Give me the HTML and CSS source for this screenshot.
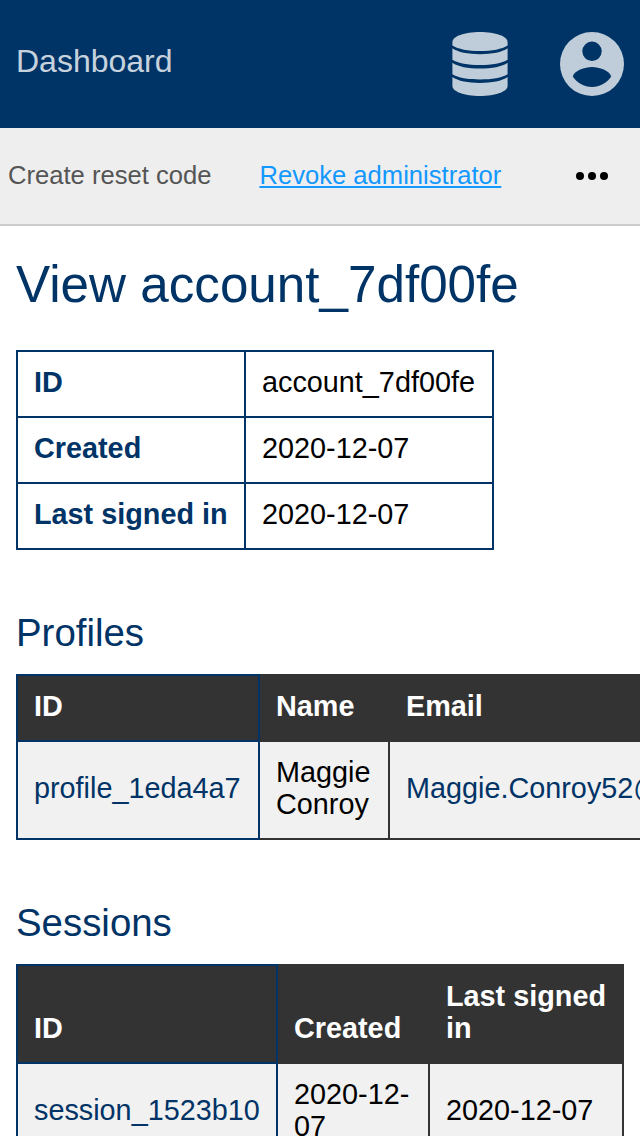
FILE: index.html
```html
<!DOCTYPE html>
<html lang="en">
<head>
<meta charset="utf-8">
<title>View account</title>
<link rel="stylesheet" href="styles.css">
</head>
<body>
<header class="header">
  <span class="brand">Dashboard</span>
  <div class="header-icons">
    <svg width="56" height="64" viewBox="0 0 56 64" fill="currentColor" aria-label="Administration">
      <path d="M.4 10C.4 4.400 12.500 0 28 0s27.600 4.400 27.600 10v3.500C50 17.200 40 19 28 19S6 17.200.4 13.500Z"/>
      <path d="M.4 16.300c5.600 4 15.600 5.900 27.600 5.900s22-1.900 27.600-5.900v11.500C50 31.400 40 33 28 33S6 31.400.4 27.800Z"/>
      <path d="M.4 30.700c5.600 4 15.600 5.900 27.600 5.900s22-1.900 27.600-5.900v11.500c-5.600 3.600-15.600 5.200-27.600 5.200S6 45.800.4 42.200Z"/>
      <path d="M.4 45.100C6 49.100 16 51 28 51s22-1.900 27.600-5.900V54c0 5.600-12.100 10-27.600 10S.4 59.600.4 54Z"/>
    </svg>
    <svg width="64" height="64" viewBox="0 0 64 64" fill="currentColor" aria-label="Account">
      <path fill-rule="evenodd" d="M32 0a32 32 0 1 1 0 64a32 32 0 0 1 0-64ZM32 9.600a9.700 9.700 0 1 0 0 19.400a9.700 9.700 0 0 0 0-19.400ZM12.800 44.500c4 6.200 11.200 10.500 19.200 10.500s15.200-4.300 19.200-10.500C50 38.600 39 35 32 35s-18 3.600-19.200 9.500Z"/>
    </svg>
  </div>
</header>
<nav class="toolbar">
  <span class="tool">Create reset code</span>
  <a class="tool tool-link">Revoke administrator</a>
  <svg class="more" width="32" height="8" viewBox="0 0 32 8" aria-label="More"><circle cx="4" cy="4" r="4"/><circle cx="16" cy="4" r="4"/><circle cx="28" cy="4" r="4"/></svg>
</nav>
<main class="content">
  <h1 class="title">View account_7df00fe</h1>
  <table class="table details">
    <colgroup><col class="w228"><col class="w248"></colgroup>
    <tr><th>ID</th><td>account_7df00fe</td></tr>
    <tr><th>Created</th><td>2020-12-07</td></tr>
    <tr><th>Last signed in</th><td>2020-12-07</td></tr>
  </table>
  <h2 class="subtitle">Profiles</h2>
  <table class="table list profiles">
    <colgroup><col class="w242"><col class="w130"><col class="w460"></colgroup>
    <thead><tr><th>ID</th><th>Name</th><th>Email</th></tr></thead>
    <tbody><tr><td><a class="link">profile_1eda4a7</a></td><td>Maggie Conroy</td><td><a class="link">Maggie.Conroy52@</a></td></tr></tbody>
  </table>
  <h2 class="subtitle">Sessions</h2>
  <table class="table list sessions">
    <colgroup><col class="w260"><col class="w152"><col class="w194"></colgroup>
    <thead><tr><th>ID</th><th>Created</th><th>Last signed in</th></tr></thead>
    <tbody><tr><td><a class="link">session_1523b10</a></td><td>2020-12-<wbr>07</td><td>2020-12-07</td></tr></tbody>
  </table>
</main>
</body>
</html>
```
FILE: styles.css
```css
* { box-sizing: border-box; }
body {
  margin: 0;
  height: 1136px;
  overflow: hidden;
  background: #fff;
  color: #000;
  font-family: "Liberation Sans", Arial, sans-serif;
}
svg { display: block; }
.header {
  display: flex;
  justify-content: space-between;
  height: 128px;
  padding: 32px 16px;
  background: #036;
}
.brand { font-size: 32px; line-height: 58px; color: rgba(255, 255, 255, .8); }
.header-icons { display: flex; gap: 52px; color: #bfccd9; }
.toolbar {
  display: flex;
  align-items: center;
  height: 98px;
  padding: 0 32px 0 8px;
  background: #eee;
  border-bottom: 2px solid #ccc;
}
.tool { font-size: 25.6px; line-height: 30px; padding-bottom: 2px; color: #555; white-space: nowrap; }
.tool-link {
  margin-left: 48px;
  color: #1398ff;
  text-decoration: underline;
  text-decoration-thickness: 2px;
  text-underline-offset: 2px;
}
.more { margin-left: auto; }
.content { padding: 0 16px; overflow: hidden; }
.title { margin: 30px 0 36px; font-size: 51.2px; line-height: 58px; font-weight: 400; color: #036; }
.subtitle { margin: 61px 0 19px; font-size: 38.4px; line-height: 44px; font-weight: 400; color: #036; }
.table { border-collapse: collapse; table-layout: fixed; font-size: 28.8px; line-height: 32px; }
.table th, .table td { padding: 14px 16px 18px; border: 2px solid #036; text-align: left; }
.details { width: 478px; }
.details th { color: #036; }
.profiles { width: 834px; }
.sessions { width: 608px; }
.list th, .list td { border-color: #333; }
.list th { background: #333; color: #fff; vertical-align: bottom; }
.list td { background: #f1f1f1; }
.list th:first-child, .list td:first-child { border-color: #036; }
.link { color: #036; }
.w228 { width: 228px; }
.w248 { width: 248px; }
.w242 { width: 242px; }
.w130 { width: 130px; }
.w460 { width: 460px; }
.w260 { width: 260px; }
.w152 { width: 152px; }
.w194 { width: 194px; }
```
